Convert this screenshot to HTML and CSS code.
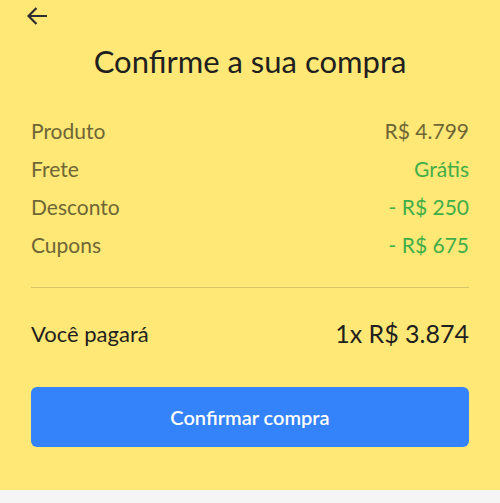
FILE: index.html
```html
<!DOCTYPE html>
<html lang="pt-BR">
<head>
<meta charset="utf-8">
<title>Confirme a sua compra</title>
<link rel="stylesheet" href="styles.css">
</head>
<body>
<div class="sheet">
  <div class="header">
    <svg class="back" width="22" height="20" viewBox="0 0 22 20" aria-hidden="true">
      <path d="M21 10H2.5M10.5 2L2.5 10L10.5 18" fill="none" stroke="#2f2f2f" stroke-width="2.2" stroke-linecap="butt" stroke-linejoin="miter"/>
    </svg>
  </div>
  <h1 class="title">Confirme a sua compra</h1>
  <div class="rows">
    <div class="row"><span class="label">Produto</span><span class="value">R$ 4.799</span></div>
    <div class="row"><span class="label">Frete</span><span class="value green">Grátis</span></div>
    <div class="row"><span class="label">Desconto</span><span class="value green">- R$ 250</span></div>
    <div class="row"><span class="label">Cupons</span><span class="value green">- R$ 675</span></div>
  </div>
  <div class="divider"></div>
  <div class="total">
    <span class="total-label">Você pagará</span>
    <span class="total-value">1x R$ 3.874</span>
  </div>
  <button class="confirm">Confirmar compra</button>
</div>
</body>
</html>
```
FILE: styles.css
```css
html, body {
  margin: 0;
  padding: 0;
  background: #f5f5f5;
}
body {
  font-family: Lato, "Open Sans", "Liberation Sans", sans-serif;
}
.sheet {
  background: #ffe875;
  height: 490px;
  box-sizing: border-box;
  padding: 0 31px;
  display: flex;
  flex-direction: column;
}
.header {
  height: 32px;
  margin-left: -5px;
  display: flex;
  align-items: flex-start;
}
.back {
  display: block;
  margin-top: 6px;
}
.title {
  margin: 11px 0 0;
  font-size: 31px;
  line-height: 36px;
  font-weight: 400;
  color: #1f1f1f;
  text-align: center;
}
.rows {
  margin-top: 32px;
  display: flex;
  flex-direction: column;
}
.row {
  display: flex;
  justify-content: space-between;
  align-items: center;
  height: 38px;
  font-size: 21px;
}
.label {
  color: #6e6636;
}
.value {
  color: #6e6636;
}
.value.green {
  color: #3fae48;
}
.divider {
  margin-top: 24px;
  height: 1px;
  background: #d2c36c;
}
.total {
  margin-top: 29px;
  height: 32px;
  display: flex;
  justify-content: space-between;
  align-items: center;
}
.total-label {
  font-size: 22px;
  color: #1f1f1f;
}
.total-value {
  font-size: 25px;
  color: #1f1f1f;
}
.confirm {
  margin-top: 38px;
  height: 60px;
  width: 100%;
  border: 0;
  border-radius: 6px;
  background: #3483fa;
  color: #ffffff;
  font-family: inherit;
  font-size: 20px;
  font-weight: 600;
  cursor: pointer;
}
```
